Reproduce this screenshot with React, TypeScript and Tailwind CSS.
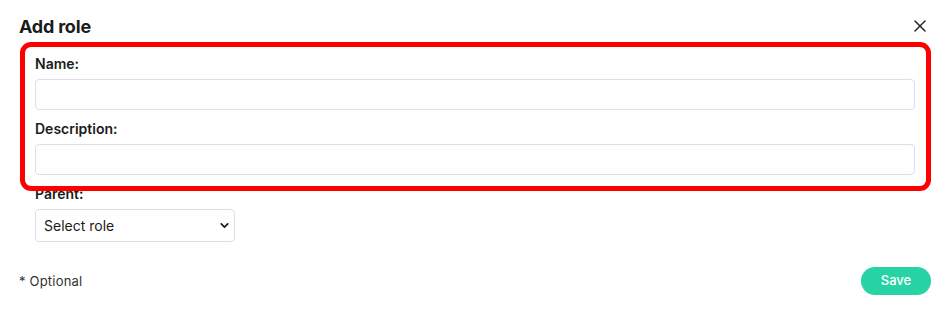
import { X, ChevronDown } from "lucide-react"

const font = { fontFamily: "Inter, 'Noto Sans', sans-serif" }

const App = () => {
  return (
    <div className="relative w-[950px] h-[315px] bg-white text-[#1b1b1b]" style={font}>
      <div className="px-[19px] pt-[14px]">
        <div className="flex items-center justify-between h-[24px]">
          <h2 className="text-[18px] font-bold tracking-[-0.2px]">Add role</h2>
          <button className="mr-[1px] text-[#222]">
            <X size={20} strokeWidth={1.8} />
          </button>
        </div>

        <form className="pl-4 pr-4 pt-[17px]">
          <label className="block text-[14px] font-semibold leading-[18px]">Name:</label>
          <input
            type="text"
            className="mt-[6px] block w-full h-[31px] rounded-[4px] border border-[#dedde9] bg-white"
          />
          <label className="block mt-[10px] text-[14px] font-semibold leading-[18px]">Description:</label>
          <input
            type="text"
            className="mt-[6px] block w-full h-[31px] rounded-[4px] border border-[#dedde9] bg-white"
          />
          <label className="block mt-[10px] text-[14px] font-semibold leading-[18px]">Parent:</label>
          <div className="mt-[6px] w-[200px] h-[33px] rounded-[4px] border border-[#dedde9] flex items-center justify-between pl-[8px] pr-[3px] text-[14px]">
            <span>Select role</span>
            <ChevronDown size={13} strokeWidth={3.2} />
          </div>
        </form>

        <div className="flex items-center justify-between mt-[25px]">
          <span className="text-[13px] text-[#333] leading-[16px] tracking-[0.2px]">* Optional</span>
          <button className="w-[70px] h-[28px] rounded-full bg-[#26d3a5] text-white text-[13px] font-medium">
            Save
          </button>
        </div>
      </div>

      <div className="absolute left-[20px] top-[42px] w-[911px] h-[149px] rounded-[11px] border-[5px] border-[#ff0000] pointer-events-none" />
    </div>
  )
}

export default App
